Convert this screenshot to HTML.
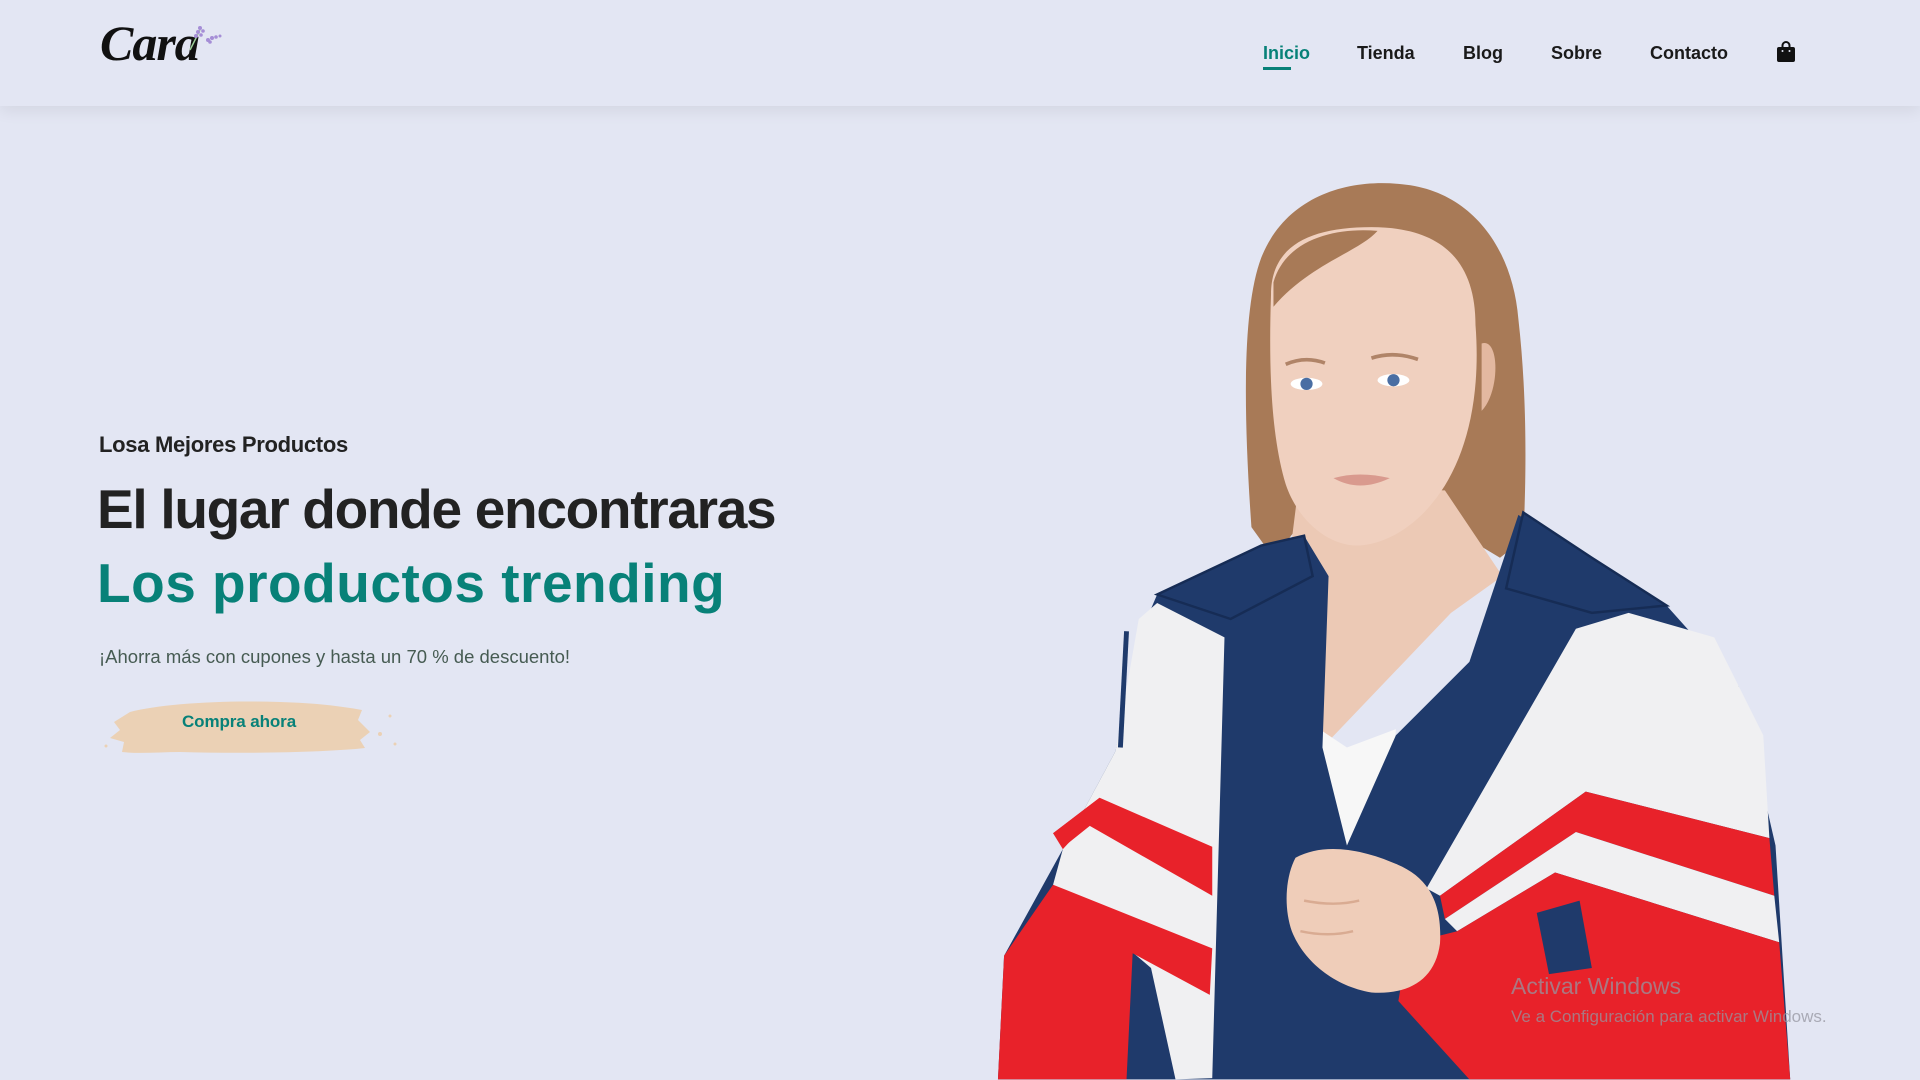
<!DOCTYPE html>
<html><head><meta charset="utf-8">
<style>
*{margin:0;padding:0;box-sizing:border-box}
html,body{width:1920px;height:1080px;overflow:hidden;background:#e3e6f3;font-family:"Liberation Sans",sans-serif}
#header{position:absolute;left:0;top:0;width:1920px;height:106px;background:#e3e6f3;box-shadow:0 5px 15px rgba(0,0,0,0.07);z-index:5}
.logo{position:absolute;left:100px;top:14px;font-family:"Liberation Serif",serif;font-style:italic;font-weight:bold;font-size:50px;color:#111;letter-spacing:-1px}
.nav a{position:absolute;top:41px;font-size:18px;font-weight:bold;color:#1a1a1a;text-decoration:none;line-height:24px}
.nav a.active{color:#088178}
.uline{position:absolute;left:1263px;top:67px;width:28px;height:3px;background:#088178}
.abs{position:absolute;white-space:nowrap}
h4.abs{left:99px;top:432px;font-size:22px;color:#222;font-weight:bold;letter-spacing:-0.3px}
h2.abs{left:97px;top:474px;font-size:55px;color:#222;font-weight:bold;letter-spacing:-1.3px;line-height:70px}
h1.abs{left:97px;top:548px;font-size:55px;color:#088178;font-weight:bold;letter-spacing:0.5px;line-height:70px}
p.abs{left:99px;top:646px;font-size:18.5px;color:#465b52;letter-spacing:0px}
.btn{left:182px;top:712px;font-size:17px;font-weight:bold;color:#088178;letter-spacing:-0.1px}
.wm1{left:1511px;top:973px;font-size:23px;color:rgba(150,150,160,0.75)}
.wm2{left:1511px;top:1007px;font-size:17px;color:rgba(150,150,160,0.75)}
</style></head><body>
<svg class="abs" style="left:0;top:0" width="1920" height="1080" viewBox="0 0 1568 881">
 <path d="M1022 430 C1015 330 1015 250 1030 210 C1050 160 1100 145 1145 150 C1200 155 1235 200 1240 260 C1248 330 1246 400 1244 440 L1225 455 L1200 440 L1180 420 L1060 430 L1040 455 Z" fill="#a87a57"/>
 <path d="M1060 400 L1180 400 L1227 470 L1185 500 L1080 610 L1075 520 L1055 440 Z" fill="#ecc9b5"/>
 <path d="M1038 240 C1038 200 1070 185 1120 185 C1180 185 1205 215 1205 265 C1210 330 1195 380 1170 410 C1150 435 1125 445 1108 445 C1085 445 1060 425 1050 395 C1038 355 1036 300 1038 240 Z" fill="#f0d0bf"/>
 <path d="M1040 230 C1050 195 1090 185 1125 188 C1110 205 1070 215 1040 250 Z" fill="#a87a57"/>
 <ellipse cx="1067" cy="313" rx="13" ry="5" fill="#fff"/><circle cx="1067" cy="313" r="5" fill="#4a6ea3"/>
 <ellipse cx="1138" cy="310" rx="13" ry="5" fill="#fff"/><circle cx="1138" cy="310" r="5" fill="#4a6ea3"/>
 <path d="M1050 297 Q1066 290 1082 296" stroke="#b08468" stroke-width="3" fill="none"/>
 <path d="M1120 292 Q1138 286 1158 293" stroke="#b08468" stroke-width="3" fill="none"/>
 <path d="M1089 390 Q1110 384 1135 390 Q1110 402 1089 390 Z" fill="#d99a8e"/>
 <path d="M1210 280 C1225 275 1225 320 1210 335 Z" fill="#e3b8a0"/>
 <path d="M1070 590 L1100 610 L1140 595 L1130 700 L1080 700 Z" fill="#f7f7f7"/>
 <path d="M945 485 L1030 445 L1065 437 L1085 470 L1080 610 L1100 690 L1140 600 L1200 540 L1240 420 L1300 460 L1361 494 L1420 560 L1450 690 L1462 881 L815 881 L820 780 L868 693 L911 613 L930 520 Z" fill="#1f3a6b"/>
 <path d="M930 505 L945 492 L1000 520 L990 880 L960 881 L940 790 L860 722 L868 693 L911 613 Z" fill="#f0f0f2"/>
 <path d="M898 651 L990 691 L990 731 L890 674 L870 690 L860 680 Z" fill="#e8222a"/>
 <path d="M860 722 L990 774 L988 812 L925 778 L920 881 L815 881 L820 780 Z" fill="#e8222a"/>
 <path d="M868 693 L880 680 L898 651 L860 680 Z" fill="#e8222a"/>
 <path d="M1287 513 L1330 500 L1400 520 L1440 600 L1445 684 L1295 646 L1176 731 L1165 725 Z" fill="#f0f0f2"/>
 <path d="M1176 731 L1295 646 L1445 684 L1449 731 L1287 679 L1180 750 Z" fill="#e8222a"/>
 <path d="M1180 750 L1287 679 L1449 731 L1453 769 L1270 712 L1190 760 Z" fill="#f0f0f2"/>
 <path d="M1190 760 L1270 712 L1453 769 L1462 881 L1200 881 L1142 817 L1150 770 Z" fill="#e8222a"/>
 <path d="M1255 745 L1290 735 L1300 790 L1265 795 Z" fill="#1f3a6b"/>
 <path d="M945 485 L1030 445 L1065 437 L1072 470 L1005 505 Z" fill="#1f3a6b" stroke="#162c55" stroke-width="2"/>
 <path d="M1244 418 L1300 455 L1361 494 L1300 500 L1230 480 Z" fill="#1f3a6b" stroke="#162c55" stroke-width="2"/>
 <path d="M920 515 L915 610" stroke="#1f3a6b" stroke-width="4"/>
 <path d="M1058 700 C1080 688 1110 692 1140 705 C1165 715 1178 735 1176 770 C1172 800 1150 812 1120 810 C1090 805 1065 785 1055 760 C1048 740 1050 715 1058 700 Z" fill="#efcdb9"/>
 <path d="M1065 735 Q1090 740 1110 735 M1062 760 Q1085 765 1105 760" stroke="#d9ab92" stroke-width="2" fill="none"/>
</svg>
<div id="header">
 <div class="logo">Cara</div>
 <svg style="position:absolute;left:186px;top:22px" width="40" height="32" viewBox="0 0 40 32">
  <path d="M4 28 L14 8" stroke="#9ccf9a" stroke-width="1.5"/>
  <g fill="#a58ed6"><circle cx="14" cy="6" r="2"/><circle cx="12" cy="10" r="2"/><circle cx="10" cy="14" r="2"/><circle cx="17" cy="9" r="1.8"/><circle cx="15" cy="13" r="1.8"/>
  <circle cx="22" cy="18" r="2"/><circle cx="26" cy="16" r="2"/><circle cx="30" cy="15" r="1.8"/><circle cx="34" cy="14" r="1.5"/><circle cx="24" cy="20" r="1.8"/></g>
 </svg>
 <div class="nav">
  <a class="active" style="left:1263px">Inicio</a>
  <a style="left:1357px">Tienda</a>
  <a style="left:1463px">Blog</a>
  <a style="left:1551px">Sobre</a>
  <a style="left:1650px">Contacto</a>
 </div>
 <div class="uline"></div>
 <svg style="position:absolute;left:1776px;top:41px" width="20" height="22" viewBox="0 0 20 22">
  <path d="M6.5 8 V4.5 a3.5 3.5 0 0 1 7 0 V8" stroke="#111" stroke-width="2" fill="none"/>
  <rect x="1" y="6" width="18" height="15" rx="2" fill="#111"/>
  <circle cx="6.5" cy="10" r="1" fill="#e3e6f3"/><circle cx="13.5" cy="10" r="1" fill="#e3e6f3"/>
 </svg>
</div>
<h4 class="abs">Losa Mejores Productos</h4>
<h2 class="abs">El lugar donde encontraras</h2>
<h1 class="abs">Los productos trending</h1>
<p class="abs">¡Ahorra más con cupones y hasta un 70 % de descuento!</p>
<svg class="abs" style="left:100px;top:692px" width="305" height="66" viewBox="0 0 305 66">
 <path d="M30 20 C60 12 120 8 180 10 C215 11 240 14 262 18 L258 28 L270 40 L260 48 L265 56 C230 60 150 62 80 60 C60 60 40 62 22 60 L24 50 L10 46 L20 38 L14 30 Z" fill="#ebd1b5"/>
 <circle cx="6" cy="54" r="1.5" fill="#ebd1b5"/><circle cx="280" cy="42" r="2" fill="#ebd1b5"/><circle cx="295" cy="52" r="1.5" fill="#ebd1b5"/><circle cx="290" cy="24" r="1.5" fill="#ebd1b5"/>
</svg>
<div class="abs btn">Compra ahora</div>
<div class="abs wm1">Activar Windows</div>
<div class="abs wm2">Ve a Configuración para activar Windows.</div>
</body></html>
